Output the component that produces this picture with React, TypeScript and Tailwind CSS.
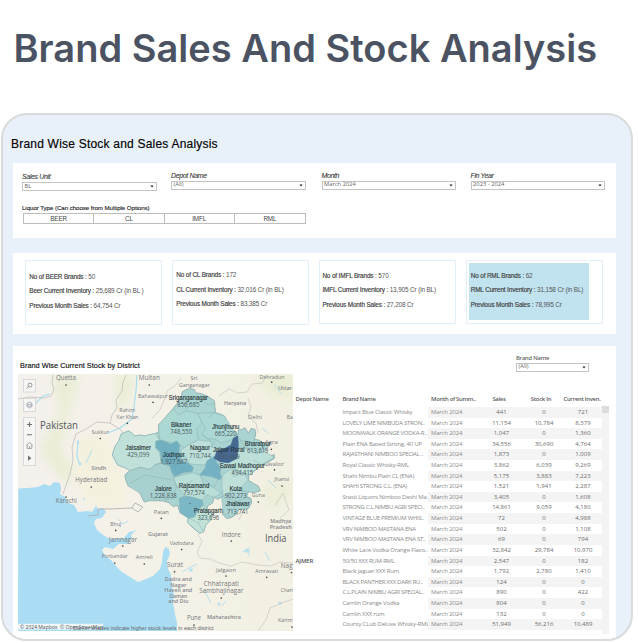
import React from "react";

const sans = "font-['Liberation_Sans',Arial,sans-serif]";
const open = "font-['Open_Sans','Noto_Sans',sans-serif]";

type Row = [string, string, string, string, string?];

const rows: Row[] = [
  ["Impact Blue Classic Whisky", "441", "0", "721"],
  ["LOVELY LIME NIMBUDA STRON..", "11,154", "10,784", "8,379"],
  ["MOONWALK ORANGE VODKA-R..", "1,047", "0", "1,360"],
  ["Plain ENA Based Strong, 40 UP", "34,556", "30,690", "4,764"],
  ["RAJASTHANI NIMBOO SPECIAL ..", "1,873", "0", "1,009"],
  ["Royal Classic Whisky-RML", "3,862", "6,039", "9,269"],
  ["Shahi Nimbu Plain CL (ENA)", "5,175", "3,883", "7,223"],
  ["SHAHI STRONG C.L. (ENA)", "1,521", "1,941", "2,287"],
  ["Srasti Liquors Nimboo Deshi Ma..", "3,405", "0", "1,608"],
  ["STRONG C.L.NIMBU AGRI SPECI..", "14,861", "9,059", "4,180"],
  ["VINTAGE BLUE PREMIUM WHIS..", "72", "0", "4,988"],
  ["VRV NIMBOO MASTANA ENA", "502", "0", "1,108"],
  ["VRV NIMBOO MASTANA ENA ST..", "69", "0", "794"],
  ["White Lace Vodka Orange Flavo..", "32,842", "29,784", "10,970"],
  ["50/50 XXX RUM-RML", "2,547", "0", "182", "AJMER"],
  ["Black Jaguar XXX Rum", "1,792", "2,780", "1,410"],
  ["BLACK PANTHER XXX DARK RU..", "124", "0", "0"],
  ["C.L.PLAIN NIMBU AGRI SPECIAL..", "890", "0", "422"],
  ["Camlin Orange Vodka", "804", "0", "0"],
  ["Camlin XXX rum", "132", "0", "0"],
  ["County CLub Deluxe Whisky-RML", "51,949", "56,216", "10,489"],
];

function Select({ value, className = "" }: { value: string; className?: string }) {
  return (
    <div className={`flex h-[9px] items-center justify-between border border-[#c4c4c4] pl-[1.5px] pr-[2px] text-[5.8px] leading-none text-[#666] ${open} ${className}`}>
      <span>{value}</span>
      <svg width="4" height="3" viewBox="0 0 4 3"><path d="M0.4 0.4h3.2L2 2.6z" fill="#222" /></svg>
    </div>
  );
}

function Filter({ label, value, className }: { label: string; value: string; className: string }) {
  return (
    <div className={`w-[134.5px] ${className}`}>
      <div className={`mb-[1px] h-[9px] text-[7px] italic leading-[9px] tracking-[-0.36px] text-[#3a3a3a] [-webkit-text-stroke:0.1px] ${sans}`}>{label}</div>
      <Select value={value} />
    </div>
  );
}

function Stat({ lines, className }: { lines: [string, string][]; className: string }) {
  return (
    <div className={`flex flex-col gap-[4.4px] whitespace-nowrap text-[6.4px] leading-[10px] tracking-[-0.14px] text-[#444] ${sans} ${className}`}>
      {lines.map(([k, v]) => (
        <div key={k}>
          <span className="[-webkit-text-stroke:0.18px]">{k} : </span>
          <span className="text-[#555]">{v}</span>
        </div>
      ))}
    </div>
  );
}

/* name, centre x, centre y, width, font size */
type Label = [string, number, number, number, number];

const cities: Label[] = [
  ["Quetta", 66, 377.7, 20, 6.4], ["Multan", 149.3, 377.7, 21, 6.4], ["Bahawalpur", 153, 396, 30, 5.8],
  ["Rahim", 127.3, 410, 16, 5.6], ["Yar Khan", 127.3, 416.7, 22, 5.6], ["Sukkur", 100.3, 432, 17, 5.8],
  ["Hyderabad", 91.3, 479.7, 32, 6.6], ["Karachi", 66.3, 500.3, 21, 6.6], ["Bhuj", 115.7, 524, 11, 5.8],
  ["Jamnagar", 123, 539, 28, 6.4], ["Porbandar", 114.7, 556.3, 26, 5.8], ["Amreli", 144.3, 557.3, 17, 5.8],
  ["Patan", 161.3, 512.3, 15, 5.8], ["Vadodara", 181.7, 543.3, 24, 5.8], ["Surat", 175, 564.7, 16, 6.4],
  ["Indore", 231.3, 534, 19, 6.4], ["Guna", 258.3, 495.3, 13, 5.6], ["Jalgaon", 226, 569.7, 20, 5.8],
  ["Amravati", 266.7, 571, 23, 5.8], ["Nag", 286.7, 565.7, 11.8, 6.4], ["Chhatrapati", 221.3, 583.3, 35, 6.4],
  ["Sambhajinagar", 221.3, 590.7, 44, 6.4], ["Chan", 286.8, 590.3, 12, 5.8], ["Pune", 194, 617.7, 14, 6.4],
  ["Karim", 285.3, 620.3, 14.6, 5.8], ["Sri", 194, 377.7, 7, 5.6], ["Ganganagar", 194.3, 385, 31, 5.6],
  ["Dehradun", 272, 376.6, 25, 5.8], ["Delhi", 255, 417, 14, 5.8], ["Ba", 289.7, 417.3, 6, 5.8],
  ["Agra", 271.3, 442.3, 13, 5.8], ["Gwalior", 274, 463.7, 20, 5.8], ["Jhansi", 281.7, 479, 15, 5.8],
];

const states: Label[] = [
  ["Sindh", 98.7, 468.3, 15, 5], ["Gujarat", 158, 534, 20, 5], ["Dadra and", 178.3, 579.3, 27, 4.9],
  ["Nagar", 178.3, 584.7, 16, 4.9], ["Haveli and", 178.3, 590, 28, 4.9], ["Daman", 178.3, 595.7, 18, 4.9],
  ["and Diu", 178.3, 601, 20, 4.9], ["Madhya", 280.7, 521.3, 21, 4.9], ["Pradesh", 280.7, 526.7, 22, 4.9],
  ["Maharashtra", 224, 617, 34, 4.9], ["Uttar", 285, 387.7, 14, 5], ["Haryana", 235, 403, 22, 5],
];

const dots: [number, number][] = [
  [66, 385], [149.3, 385], [153, 402.3], [127.3, 423.3], [100.3, 438.5], [91.3, 487], [66, 497], [115.7, 530.4],
  [122.7, 546], [114.7, 563], [144.3, 564], [161.3, 518.3], [181.7, 549.5], [174.5, 571.7], [231.3, 541],
  [258.3, 502], [226, 576], [266.7, 577.3], [291.5, 572.5], [221.3, 598], [194, 625], [292, 627], [271.7, 382.2],
  [271.3, 449.3], [274.5, 469.8], [282, 486],
];

/* name, x, y, width, stock figure, figure width */
const districts: [string, number, number, number, string, number][] = [
  ["Sriganganagar", 188.3, 397.3, 39, "856,685", 22], ["Bikaner", 181.2, 424, 20.5, "748,550", 22],
  ["Jhunjhunu", 225.7, 426, 27.5, "665,220", 22], ["Jaisalmer", 138.3, 447, 25.5, "429,099", 22],
  ["Jodhpur", 173.7, 454, 22, "1,927,687", 27], ["Nagaur", 200, 447.7, 20, "710,744", 21.5],
  ["Jaipur Rural", 228.7, 449.3, 31.5, "299,489", 22], ["Bharatpur", 257.7, 443.3, 26, "613,619", 21.5],
  ["Sawai Madhopur", 242.3, 465, 45, "494,415", 21.5], ["Jalore", 163.3, 488, 17, "1,228,838", 27],
  ["Rajsamand", 194, 485.3, 30.5, "797,574", 21.5], ["Kota", 235.7, 488, 12.5, "902,273", 22],
  ["Jhalawar", 237.7, 503.7, 24, "713,741", 21.5], ["Pratapgarh", 208.3, 510, 29, "323,696", 21.5],
];

const region =
  "M22 225L30 200L42 182L48 163L58 158L70 153L82 160L88 168L105 165L118 168L152 160L162 155L160 135L175 120L190 102L202 88L215 72L228 52L232 35L250 26L268 28L272 38L292 42L310 50L328 62L330 82L332 98L345 102L358 108L365 125L372 138L385 150L398 166L400 150L412 148L420 143L430 160L438 146L450 148L452 165L448 178L462 180L475 190L492 195L480 215L492 228L508 224L508 235L488 248L470 254L452 270L432 285L430 300L445 310L460 318L466 332L448 338L430 335L424 350L438 355L440 368L430 385L402 388L395 402L380 412L365 416L352 402L362 385L355 372L362 355L352 350L338 358L328 352L322 370L308 378L305 392L322 402L318 420L302 435L296 455L284 460L265 445L248 428L250 412L225 398L218 376L205 380L192 368L172 362L150 362L132 362L118 366L105 340L92 325L70 318L62 298L60 285L75 272L62 264L38 255Z";

function MapLabel({ l, bold = false, fill = "#777a80" }: { l: Label; bold?: boolean; fill?: string }) {
  return (
    <text x={l[1]} y={l[2]} fontSize={l[4]} textLength={l[3]} lengthAdjust="spacingAndGlyphs" dominantBaseline="central" fontWeight={bold ? 600 : 400} fill={fill}>
      {l[0]}
    </text>
  );
}

function DistrictMap() {
  return (
    <svg className={`block ${open}`} width="275" height="257" viewBox="18 374 275 257" textAnchor="middle">
      <defs>
        <linearGradient id="land" x1="0" x2="1">
          <stop offset="0" stopColor="#f4f0ec" />
          <stop offset="0.5" stopColor="#f4f1e7" />
          <stop offset="1" stopColor="#f2f0e2" />
        </linearGradient>
        <filter id="soft"><feGaussianBlur stdDeviation="5" /></filter>
      </defs>
      <rect x="18" y="374" width="275" height="257" fill="url(#land)" />
      <g filter="url(#soft)" fill="#e7ecce" opacity="0.75">
        <path d="M52 375L80 375L72 400L65 430L60 450L74 470L68 485L54 470L40 450L60 410Z" />
        <path d="M116 375L134 375L129 400L118 412Z" />
        <path d="M75 440L100 432L110 440L120 470L128 505L110 507L88 506L76 482Z" fill="#f4f1db" />
        <path d="M255 374L293 374L293 398L270 394Z" />
        <path d="M262 485L290 480L288 500L268 508Z" fill="#ebecd5" />
      </g>
      <path d="M18.3 488.5L28 488L38 487L44 484L50 486L54 482L60 483L61 489L60 494L65 497L68 503L74 505L78 512L88 511L92 512L96 506L98 509L103 508L106 512L102 518L96 519L94 523L97 530L103 535L108 538L116 539L124 538L129 532L135 531L131 535L132 538L128 544L119 544L113 549L105 547L102 550L105 556L111 560L116 566L122 572L130 577L138 582L146 579L153 576L160 569L162 562L163 552L165 547L169 549L170 554L167 561L168 569L171 575L172 585L174 594L173 603L175 614L177 623L177 631L18 631Z" fill="#aaddf3" />
      <g fill="none" stroke="#a6dcf2" strokeWidth="1.1">
        <path d="M137 375L136 391L134 407L132 419L120 428L108 433M78 440L77 457L80 465M35 404L43 396L50 394" />
        <path d="M118 519L123 524L128 521M129 535L136 530M92 450L86 463M182 572L189 568L197 564M242 552L249 548L249 556M265 552L270 561M274 384L281 394M262 428L268 433M268 480L276 488M226 601L222 606M204 590L211 603" strokeWidth="0.8" />
      </g>
      <g fill="#b2e0f3">
        <circle cx="78" cy="443" r="1.3" /><circle cx="80" cy="464" r="1.4" /><circle cx="84" cy="499" r="1" />
        <circle cx="247" cy="551" r="1.8" /><circle cx="191" cy="570" r="1.8" /><circle cx="219" cy="604" r="1.5" /><circle cx="280" cy="603" r="1.5" />
      </g>
      <g fill="none" stroke="#c3bfbf" strokeWidth="0.8">
        <path d="M18 399L30 397L44 398L51 396L54 390L52 383L53 375" />
        <path d="M126 375L123 382L122 391L116 400L117 408L112 415L110 423L97 422L86 429L76 434L72 447L73 460L70 474L63 494" />
        <path d="M110 423L120 429L126 437L132 440" />
        <path d="M88 516L98 515L98 509L108 509L132 508L135 503L143 507L138 512L132 508" stroke="#aaa" />
        <path d="M152 418L160 410L168 390L175 386L181 378M219 396L229 389L238 393L247 392L252 384L262 383L267 375M248 398L251 407L248 416L256 423L258 433M239 520L244 509L250 507M198 534L202 541L197 553L200 558L210 559L219 563L231 566L242 562L258 565L271 566L280 562L293 563M293 599L282 603L270 608L266 620L258 631M275 506L283 493L289 510L280 518" strokeWidth="0.6" />
      </g>

      <g>{cities.map((l) => <MapLabel key={l[0]} l={l} />)}</g>

      <g transform="translate(105 380) scale(0.33333)" strokeLinejoin="round">
        <path d={region} fill="#a9d4d2" stroke="#8aa8a9" strokeWidth="2.4" />
        <g stroke="#8db5b6" strokeWidth="1.8">
          <path fill="#c0e1da" d="M22 225L30 200L42 182L48 163L58 158L70 153L82 160L88 168L105 165L118 168L152 160L164 182L154 190L152 205L164 216L168 248L150 254L135 268L105 262L75 272L62 264L38 255Z" />
          <path fill="#acd8d4" d="M162 155L160 135L190 102L205 86L220 105L245 92L278 100L292 128L275 145L280 180L255 192L240 205L220 190L165 182Z" />
          <path fill="#bcdfd9" d="M255 192L280 180L318 184L320 202L350 205L335 218L330 236L295 255L255 252L240 228L225 212Z" />
          <path fill="#abd7d4" d="M278 100L330 98L358 108L385 150L398 166L375 182L348 190L332 178L302 175L290 160L302 148L292 128Z" />
          <path fill="#a7d0cf" d="M62 300L60 285L75 272L105 262L135 268L150 254L170 250L195 258L205 292L215 318L205 355L172 362L132 362L118 366L105 340L70 318Z" />
          <path fill="#bce0d8" d="M398 202L422 205L450 220L480 215L508 232L470 254L432 285L405 275L385 262L350 265L345 245L370 248L398 235Z" />
          <path fill="#bee0d9" d="M352 285L380 265L415 280L430 300L410 320L415 335L385 330L355 350L350 320Z" />
          <path fill="#aad3d2" d="M350 350L385 330L430 335L424 350L440 368L430 385L402 388L380 412L355 400Z" />
          <path fill="#b9ddd7" d="M205 292L262 278L285 285L295 310L325 322L350 340L328 352L305 345L290 362L262 352L240 348L215 318Z" />
          <path fill="#c0e2d9" d="M250 412L280 390L295 375L308 392L322 402L318 420L302 435L296 455L284 460L248 428Z" />
          <path fill="#70afc0" d="M152 183L170 180L198 192L215 182L225 195L222 215L230 225L225 240L250 250L265 262L262 275L235 278L210 290L200 275L195 258L170 250L166 216L152 202Z" />
          <path fill="#75b1c2" d="M328 228L335 247L348 262L345 280L350 290L345 300L320 290L284 285L300 265L305 243Z" />
          <path fill="#7cb7c6" d="M222 355L240 348L262 352L292 360L295 375L280 390L268 412L250 415L225 398Z" />
          <path fill="#466994" stroke="#3d5f8c" d="M398 168L400 195L396 235L370 248L345 245L328 235L335 215L360 205L378 195L385 175Z" />
        </g>
        <path d="M225 50L245 72L270 68L285 55L310 75L330 70M245 92L240 72M290 160L318 184M330 98L310 112M332 178L320 202M398 166L420 205L450 180M405 182L430 185M445 240L470 254M285 285L325 322L340 300M210 318L240 325L262 300M295 310L270 330M380 265L385 290L415 280M355 350L395 365L430 350M385 390L395 365M250 412L280 430L296 455M280 430L308 392M160 362L180 335L205 340M75 310L120 285L200 300" fill="none" stroke="#8db5b6" strokeWidth="1.6" />
        <circle cx="255" cy="370" r="2" fill="#457" />
      </g>

      <g fill="#4b4b4b">{dots.map(([x, y]) => <circle key={`${x}-${y}`} cx={x} cy={y} r="0.85" />)}</g>
      <g>{states.map((l) => <MapLabel key={l[0]} l={l} bold fill="#85878d" />)}</g>
      <MapLabel l={["Pakistan", 59, 425, 38, 10]} fill="#55585e" />
      <MapLabel l={["India", 275.7, 537.7, 21.5, 10]} fill="#55585e" />

      {districts.map(([name, x, y, w, n, nw]) => (
        <g key={name} dominantBaseline="central">
          <text className={sans} x={x} y={y} fontSize="6.6" fill="#263234" stroke="#263234" strokeWidth="0.12" textLength={w} lengthAdjust="spacingAndGlyphs">{name}</text>
          <text x={x} y={y + 7.5} fontSize="6.6" fill="#4a5a5e" textLength={nw} lengthAdjust="spacingAndGlyphs">{n}</text>
        </g>
      ))}

      <g fill="#f6f6f5" stroke="#d3d3d3" strokeWidth="0.8">
        <rect x="23.4" y="379.4" width="12.2" height="12.6" />
        <rect x="23.4" y="398.4" width="12.2" height="13" />
        <rect x="23.4" y="417.6" width="12.2" height="47.8" />
      </g>
      <g fill="none" stroke="#8b8b8b" strokeWidth="0.9">
        <circle cx="30" cy="385" r="2" /><path d="M28.5 386.6L26.6 388.5" />
        <path d="M27 403.5L29.5 402L32 403.5L32 406.5L29.5 408L27 406.5ZM27 403.5L29.5 405L32 403.5M27 405L29.5 406.5L32 405" stroke="#a0a8b0" />
        <path d="M29.5 422V427M27 424.5H32M27 434.7H32" stroke="#707070" strokeWidth="1.1" />
        <path d="M26.2 445.4L29.5 442.4L32.8 445.4M27.2 445V448.4H31.8V445M29.5 448.4V446.3" stroke="#999" />
      </g>
      <path d="M28 455.6L31.4 458.2L28 460.8Z" fill="#707070" />

      <rect x="18" y="623.8" width="85" height="5.8" fill="#f5f8f8" opacity="0.9" />
      <g dominantBaseline="central" textAnchor="start" fontSize="5.6" fill="#4e5559">
        <text x="20" y="626.9" textLength="37.5" lengthAdjust="spacingAndGlyphs">© 2024 Mapbox</text>
        <text x="60" y="626.9" textLength="43" lengthAdjust="spacingAndGlyphs">© OpenStreetMap</text>
        <text className={sans} x="73" y="628" fill="#63696b" textLength="140.5" lengthAdjust="spacingAndGlyphs">Darker shades indicate higher stock levels in each district</text>
      </g>
    </svg>
  );
}

export default function App() {
  return (
    <main className="h-[643px] w-[638px] overflow-hidden bg-white">
      <h1 className="h-[113px] whitespace-nowrap pl-[13.5px] pt-[22.5px] font-['Inter',sans-serif] text-[38px] font-semibold leading-[50px] tracking-[0.02px] text-[#4b5363]">
        Brand Sales And Stock Analysis
      </h1>

      <section className="ml-[0.5px] flex h-[527.5px] w-[632.5px] flex-col overflow-hidden rounded-[26px] border-[2.5px] border-[#d9dada] bg-[#e8f0f9] pl-[10.5px] pr-[15px]">
        <h2 className={`-ml-[2px] h-[47.5px] shrink-0 whitespace-nowrap pt-[21px] text-[12px] leading-[16px] tracking-[0.21px] text-black [-webkit-text-stroke:0.15px] ${sans}`}>
          Brand Wise Stock and Sales Analysis
        </h2>

        <div className="h-[75px] shrink-0 bg-white">
          <div className="flex h-[42px]">
            <Filter label="Sales Unit" value="BL" className="ml-[9px] mt-[9.5px]" />
            <Filter label="Depot Name" value="(All)" className="ml-[14.5px] mt-[8px]" />
            <Filter label="Month" value="March 2024" className="ml-[16px] mt-[8px]" />
            <Filter label="Fin Year" value="2023 - 2024" className="ml-[14.5px] mt-[8px]" />
          </div>
          <div className={`ml-[9px] ${sans}`}>
            <div className="h-[8.5px] whitespace-nowrap text-[6.2px] leading-[6.5px] tracking-[-0.08px] text-[#222] [-webkit-text-stroke:0.12px]">Liquor Type (Can choose from Multiple Options)</div>
            <div className="ml-[1px] grid h-[11px] w-[283px] grid-cols-4 divide-x divide-[#bdbdbd] border border-[#bdbdbd] text-center text-[6.3px] leading-[9px] tracking-[-0.1px] text-[#444]">
              <span>BEER</span><span>CL</span><span>IMFL</span><span>RML</span>
            </div>
          </div>
        </div>

        <div className="mt-[15px] flex h-[81px] shrink-0 bg-white pl-[12px] pt-[7px]">
          <div className="h-[65.5px] w-[137px] border border-[#e3effb]">
            <Stat className="ml-[3.3px] mt-[11.3px]" lines={[["No of BEER Brands", "50"], ["Beer Current Inventory", "25,689 Cr (in BL )"], ["Previous Month Sales", "64,754 Cr"]]} />
          </div>
          <div className="ml-[9.5px] h-[65px] w-[137px] border border-[#e3effb]">
            <Stat className="ml-[3.7px] mt-[9.9px]" lines={[["No of CL Brands", "172"], ["CL Current Inventory", "32,016 Cr (in BL)"], ["Previous Month Sales", "83,385 Cr"]]} />
          </div>
          <div className="ml-[10.5px] h-[64px] w-[137px] border border-[#e3effb]">
            <Stat className="ml-[2.4px] mt-[10.6px]" lines={[["No of IMFL Brands", "570"], ["IMFL Current Inventory", "13,905 Cr (in BL)"], ["Previous Month Sales", "27,208 Cr"]]} />
          </div>
          <div className="ml-[10px] h-[64px] w-[137px] border border-[#e3effb] pl-[2px] pt-[2px]">
            <div className="h-[57px] w-[119.5px] bg-[#c1e3ef] pt-[8.6px]">
              <Stat className="ml-[1.7px]" lines={[["No of RML Brands", "62"], ["RML Current Inventory", "31,158 Cr (in BL)"], ["Previous Month Sales", "78,995 Cr"]]} />
            </div>
          </div>
        </div>

        <div className="mt-[12px] flex grow bg-white pl-[5px]">
          <div className="w-[275px] shrink-0">
            <h3 className={`ml-[2px] h-[28px] whitespace-nowrap pt-[15.5px] text-[7.3px] leading-[9px] tracking-[0.04px] text-[#111] [-webkit-text-stroke:0.15px] ${sans}`}>
              Brand Wise Current Stock by District
            </h3>
            <DistrictMap />
          </div>

          <div className={`ml-[2.5px] w-[314px] shrink-0 whitespace-nowrap ${open}`}>
            <div className="ml-[220.5px] w-[73px] pt-[8px]">
              <div className="mb-[1px] h-[8px] text-[5.8px] font-semibold leading-[8px] tracking-[-0.2px] text-[#666]">Brand Name</div>
              <Select value="(All)" />
            </div>
            <div className="mt-[21.5px] grid h-[12.5px] grid-cols-[47px_88.5px_47px_42px_42px_40px] text-[5.9px] font-semibold leading-[12px] tracking-[-0.28px] text-[#5c5c5c]">
              <span>Depot Name</span>
              <span>Brand Name</span>
              <span>Month of Summ..</span>
              <span className="text-center">Sales</span>
              <span className="text-center">Stock In</span>
              <span className="text-center">Current Inven.</span>
            </div>
            <div className="flex">
              <div className="w-[306.5px] pt-[1.5px] text-[6px] leading-[10.6px] tracking-[-0.19px] text-[#8b8b8b]">
                {rows.map(([brand, sales, stock, current, depot], i) => (
                  <div key={brand} className="flex h-[10.61px]">
                    <span className="w-[47px] font-semibold text-[#555]">{depot}</span>
                    <span className={`w-[85.5px] ${brand === brand.toUpperCase() ? "tracking-[-0.3px]" : ""}`}>{brand}</span>
                    <div className={`grid w-[174px] grid-cols-[45px_51px_34px_44px] pl-[3px] text-center ${i % 2 === 0 ? "bg-[#f4f4f4]" : "bg-white"}`}>
                      <span className="text-left">March 2024</span>
                      <span className="tracking-normal text-[#6c6c6c]">{sales}</span>
                      <span className="tracking-normal text-[#6c6c6c]">{stock}</span>
                      <span className="tracking-normal text-[#6c6c6c]">{current}</span>
                    </div>
                  </div>
                ))}
              </div>
              <div className="h-[228px] w-[7px] bg-[#f3f3f3]">
                <div className="h-[7px] bg-[#dcdcdc]" />
              </div>
            </div>
          </div>
        </div>
      </section>
    </main>
  );
}
